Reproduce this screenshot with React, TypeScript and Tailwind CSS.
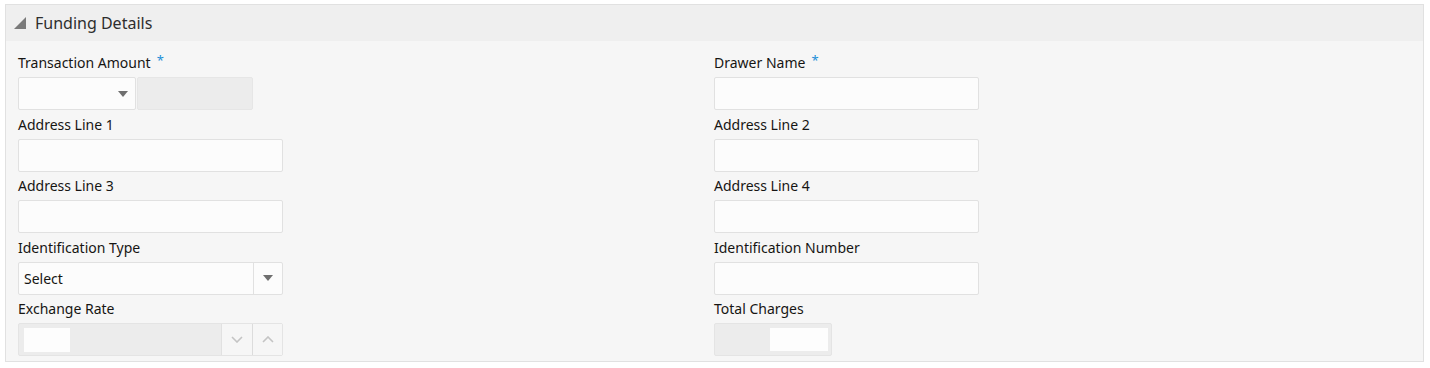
import type { ReactNode } from 'react';

const font = { fontFamily: '"Noto Sans", "Open Sans", sans-serif' };

function Caret({ className = '' }: { className?: string }) {
  return (
    <svg width="10" height="6" viewBox="0 0 10 6" className={className}>
      <path d="M0 0 H10 L5 6 Z" fill="#6f6f6f" />
    </svg>
  );
}

function Chevron({ up = false }: { up?: boolean }) {
  return (
    <svg width="12" height="7" viewBox="0 0 12 7">
      <path d={up ? 'M1 6 L6 1 L11 6' : 'M1 1 L6 6 L11 1'} fill="none" stroke="#c4c4c4" strokeWidth="1.6" />
    </svg>
  );
}

function Field({ label, required, children }: { label: string; required?: boolean; children: ReactNode }) {
  return (
    <div>
      <div className="h-5 leading-5 mt-[1px] mb-[4px] text-[14px] text-[#161513] flex items-start">
        {label}
        {required && <span className="ml-[6px] text-[#1b8fd8] text-[13px] leading-[14px]">*</span>}
      </div>
      {children}
    </div>
  );
}

function TextBox() {
  return <div className="w-[265px] h-[33px] bg-[#fcfcfc] border border-[#e1e1e1] rounded-[2px]" />;
}

export default function App() {
  return (
    <div className="w-[1430px] h-[368px] bg-white pt-1 pl-[5px] pr-[6px]" style={font}>
      <div className="border border-[#e1e1e1] bg-[#f6f6f6]">
        {/* header */}
        <div className="h-9 bg-[#efefef] flex items-center pl-2">
          <svg width="12" height="12" viewBox="0 0 12 12">
            <path d="M12 0 V12 H0 Z" fill="#7a7a7a" />
          </svg>
          <span className="ml-[9px] text-[16px] text-[#2e2e2e]">Funding Details</span>
        </div>

        {/* body */}
        <div className="grid grid-cols-[696px_1fr] gap-y-[3.5px] px-3 pt-[11px] pb-[5px]">
          <Field label="Transaction Amount" required>
            <div className="flex h-[33px] w-[235px] gap-[1px]">
              <div className="w-[118px] h-full bg-[#fcfcfc] border border-[#e1e1e1] rounded-[2px] flex items-center justify-end pr-[7px]">
                <Caret />
              </div>
              <div className="flex-1 h-full bg-[#ececec] border border-[#e6e6e6] rounded-[2px]" />
            </div>
          </Field>
          <Field label="Drawer Name" required>
            <TextBox />
          </Field>

          <Field label="Address Line 1">
            <TextBox />
          </Field>
          <Field label="Address Line 2">
            <TextBox />
          </Field>

          <Field label="Address Line 3">
            <TextBox />
          </Field>
          <Field label="Address Line 4">
            <TextBox />
          </Field>

          <Field label="Identification Type">
            <div className="w-[265px] h-[33px] bg-[#fcfcfc] border border-[#e1e1e1] rounded-[2px] flex">
              <div className="flex-1 flex items-center pl-[5px] text-[14px] text-[#161513]">Select</div>
              <div className="w-[29px] border-l border-[#e1e1e1] flex items-center justify-center">
                <Caret />
              </div>
            </div>
          </Field>
          <Field label="Identification Number">
            <TextBox />
          </Field>

          <Field label="Exchange Rate">
            <div className="w-[265px] h-[33px] bg-[#ececec] border border-[#e4e4e4] rounded-[2px] flex">
              <div className="flex-1 pl-[5px] pt-[4px]">
                <div className="w-[46px] h-6 bg-[#fdfdfd]" />
              </div>
              <div className="w-[31px] bg-[#f6f6f6] border-l border-[#e1e1e1] flex items-center justify-center">
                <Chevron />
              </div>
              <div className="w-[30px] bg-[#f6f6f6] border-l border-[#dcdcdc] flex items-center justify-center">
                <Chevron up />
              </div>
            </div>
          </Field>
          <Field label="Total Charges">
            <div className="w-[118px] h-[33px] bg-[#ececec] border border-[#e4e4e4] rounded-[2px] flex justify-end items-center pr-[3px]">
              <div className="w-[58px] h-[23px] bg-[#fdfdfd]" />
            </div>
          </Field>
        </div>
      </div>
    </div>
  );
}
